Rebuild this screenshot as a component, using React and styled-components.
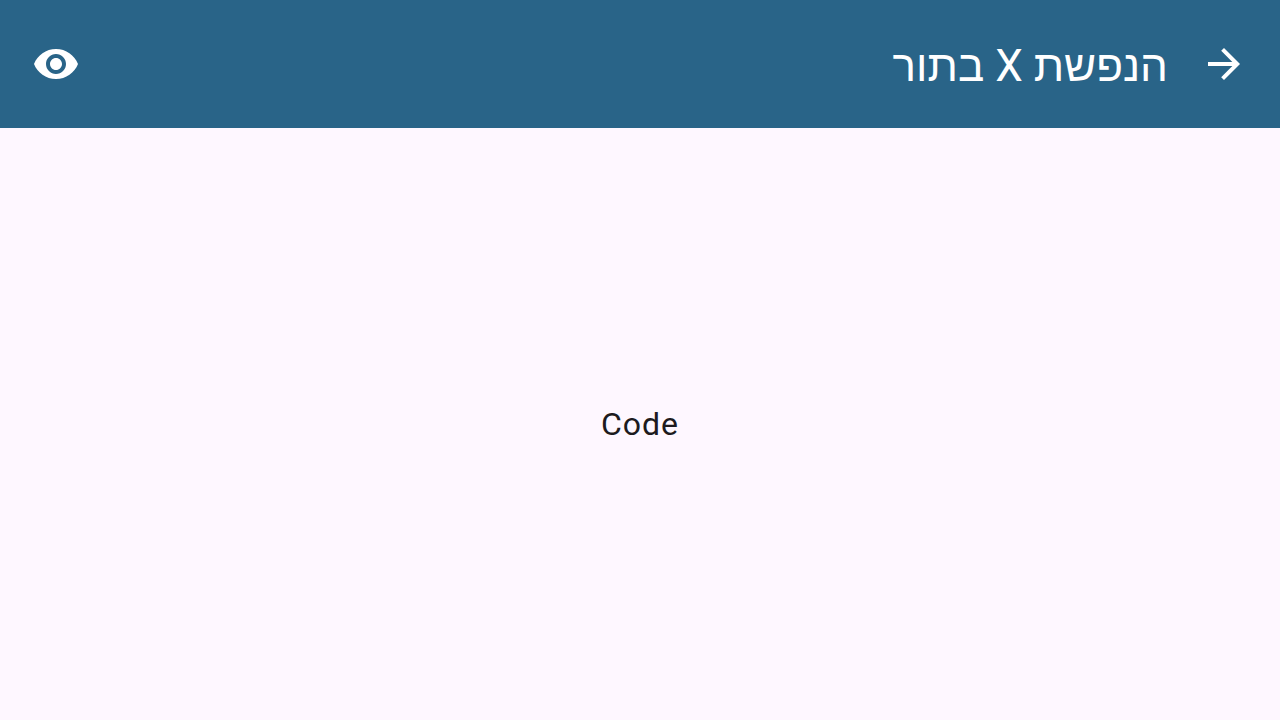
import React from 'react';
import styled, { createGlobalStyle } from 'styled-components';

const GlobalStyle = createGlobalStyle`
  * { box-sizing: border-box; }
  body { margin: 0; background: #fef7ff; }
`;

const Screen = styled.div`
  min-height: 100vh;
  display: flex;
  flex-direction: column;
  background: #fef7ff;
  color: #1d1b20;
  font-family: Roboto, "Liberation Sans", sans-serif;
`;

const AppBar = styled.header`
  display: flex;
  align-items: center;
  gap: 8px;
  height: 128px;
  padding: 0 8px;
  background: #296488;
  color: #fff;
`;

const IconButton = styled.button`
  display: flex;
  align-items: center;
  justify-content: center;
  width: 96px;
  height: 96px;
  padding: 0;
  border: 0;
  border-radius: 50%;
  background: none;
  color: inherit;
  cursor: pointer;
`;

const Icon = styled.svg`
  width: 48px;
  height: 48px;
  fill: currentColor;
`;

const Title = styled.h1`
  flex: 1;
  margin: 0;
  padding-top: 4px;
  font-size: 44px;
  line-height: 56px;
  font-weight: 400;
  white-space: nowrap;
`;

const Content = styled.main`
  flex: 1;
  display: flex;
  align-items: center;
  justify-content: center;
`;

const Label = styled.p`
  margin: 0;
  font-size: 32px;
  line-height: 48px;
  letter-spacing: 1px;
`;

export default function App() {
  return (
    <Screen dir="rtl" lang="he">
      <GlobalStyle />
      <AppBar>
        <IconButton type="button" aria-label="חזרה">
          <Icon viewBox="0 0 24 24" aria-hidden="true">
            <path d="M12 4l-1.41 1.41L16.17 11H4v2h12.17l-5.58 5.59L12 20l8-8z" />
          </Icon>
        </IconButton>
        <Title>הנפשת X בתור</Title>
        <IconButton type="button" aria-label="תצוגה">
          <Icon viewBox="0 0 24 24" aria-hidden="true">
            <path d="M12 4.5C7 4.5 2.73 7.61 1 12c1.73 4.39 6 7.5 11 7.5s9.27-3.11 11-7.5c-1.73-4.39-6-7.5-11-7.5zM12 17c-2.76 0-5-2.24-5-5s2.24-5 5-5 5 2.24 5 5-2.24 5-5 5zm0-8c-1.66 0-3 1.34-3 3s1.34 3 3 3 3-1.34 3-3-1.34-3-3-3z" />
          </Icon>
        </IconButton>
      </AppBar>
      <Content>
        <Label>Code</Label>
      </Content>
    </Screen>
  );
}
